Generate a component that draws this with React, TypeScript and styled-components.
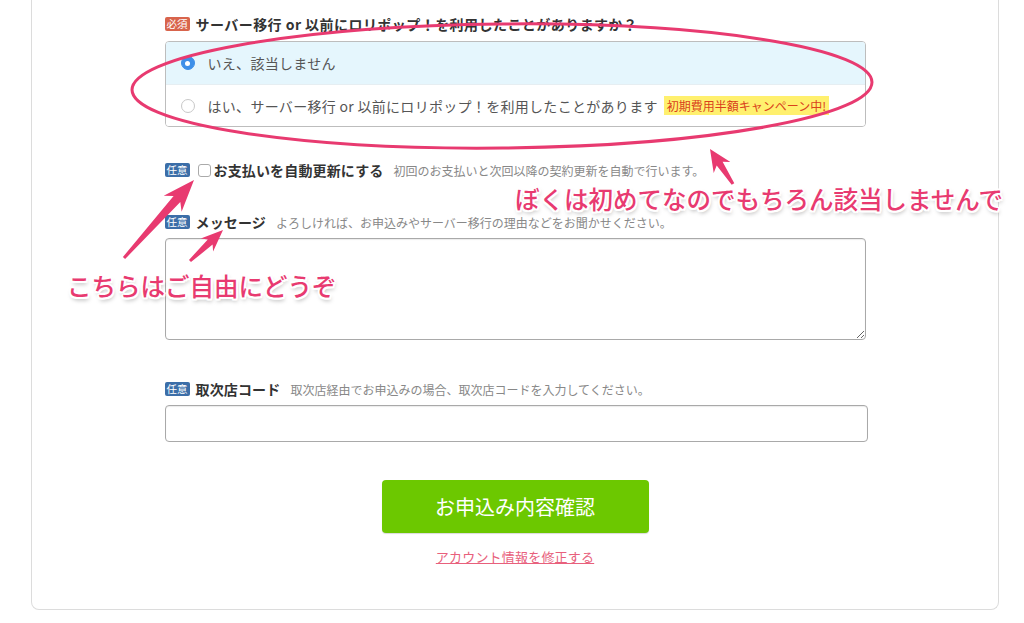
import React from "react";
import styled, { createGlobalStyle } from "styled-components";

const Global = createGlobalStyle`
  html, body { margin: 0; padding: 0; background: #fff; }
  body { font-family: "Noto Sans CJK JP", "Noto Sans", sans-serif; color: #333; }
  * { box-sizing: border-box; }
`;

const Root = styled.div`
  position: relative;
  width: 1024px;
  height: 623px;
  overflow: hidden;
`;

const Card = styled.div`
  margin-left: 31px;
  width: 968px;
  border: 1px solid #dcdcdc;
  border-top: none;
  border-radius: 0 0 8px 8px;
  padding: 14px 0 42px;
  background: #fff;
`;

const Form = styled.div`
  width: 701px;
  margin: 0 auto;
  display: flex;
  flex-direction: column;
`;

const LabelRow = styled.div<{ $mt?: number }>`
  display: flex;
  align-items: center;
  height: 20px;
  margin-top: ${(p) => p.$mt ?? 0}px;
  white-space: nowrap;
`;

const Badge = styled.span<{ $kind: "req" | "opt" }>`
  display: inline-flex;
  align-items: center;
  justify-content: center;
  height: 14px;
  padding: 0 2px;
  margin-right: 6px;
  font-size: 10.5px;
  line-height: 1;
  color: #fff;
  border-radius: 2px;
  background: ${(p) => (p.$kind === "req" ? "#d8644c" : "#3c6ea8")};
`;

const LabelText = styled.span<{ $ls?: number }>`
  font-size: 14px;
  font-weight: 700;
  letter-spacing: ${(p) => p.$ls ?? 0.15}px;
  color: #333;
`;

const Hint = styled.span`
  margin-left: 10px;
  font-size: 12px;
  color: #888;
`;

const RadioBox = styled.div`
  margin-top: 7px;
  border: 1px solid #bdbdbd;
  border-radius: 4px;
  overflow: hidden;
`;

const RadioRow = styled.label<{ $active?: boolean }>`
  display: flex;
  align-items: center;
  height: 42px;
  padding-left: 15px;
  background: ${(p) => (p.$active ? "#e5f6fd" : "#fff")};
  & + & { border-top: 1px solid #e6eef2; height: 42px; }
  font-size: 14px;
  letter-spacing: 0.3px;
  color: #555;
`;

const RadioDot = styled.span<{ $on?: boolean }>`
  position: relative;
  width: 14px;
  height: 14px;
  border-radius: 50%;
  margin-right: 13px;
  background: ${(p) => (p.$on ? "#3d8fe8" : "#fff")};
  border: 1px solid ${(p) => (p.$on ? "#3d8fe8" : "#c8c8c8")};
  &::after {
    content: "";
    display: ${(p) => (p.$on ? "block" : "none")};
    position: absolute;
    left: 50%;
    top: 50%;
    width: 5px;
    height: 5px;
    margin: -2.5px 0 0 -2.5px;
    border-radius: 50%;
    background: #fff;
  }
`;

const Campaign = styled.span`
  margin-left: 6px;
  padding: 1px 3px;
  font-size: 12px;
  letter-spacing: 0;
  color: #d9411c;
  background: #fff06e;
`;

const CheckBox = styled.span`
  width: 13px;
  height: 13px;
  margin: 0 3px 0 2px;
  border: 1px solid #aaa;
  border-radius: 3px;
  background: #fff;
`;

const TextArea = styled.textarea`
  margin-top: 6px;
  width: 701px;
  height: 102px;
  border: 1px solid #a9a9a9;
  border-radius: 4px;
  box-shadow: inset 0 1px 1px rgba(0, 0, 0, 0.08);
  font-family: inherit;
`;

const Input = styled.input`
  margin-top: 6px;
  width: 703px;
  height: 37px;
  border: 1px solid #a9a9a9;
  border-radius: 4px;
  box-shadow: inset 0 1px 1px rgba(0, 0, 0, 0.08);
`;

const Submit = styled.button`
  align-self: center;
  margin-top: 38px;
  width: 267px;
  height: 53px;
  border: none;
  border-radius: 4px;
  background: #6cc800;
  color: #fff;
  font-family: inherit;
  font-size: 20px;
  box-shadow: 0 1px 1px rgba(0, 0, 0, 0.15);
`;

const EditLink = styled.a`
  align-self: center;
  margin-top: 14px;
  height: 20px;
  line-height: 20px;
  font-size: 13px;
  letter-spacing: 0.2px;
  color: #e8607c;
  text-decoration: underline;
`;

const Overlay = styled.div`
  position: absolute;
  inset: 0;
  pointer-events: none;
`;

const Note = styled.div<{ $x: number; $y: number }>`
  position: absolute;
  left: ${(p) => p.$x}px;
  top: ${(p) => p.$y}px;
  font-size: 24.5px;
  line-height: 30px;
  font-weight: 500;
  white-space: nowrap;
  color: #e83a70;
  text-shadow: 2px 0 #fff, -2px 0 #fff, 0 2px #fff, 0 -2px #fff,
    1.5px 1.5px #fff, -1.5px 1.5px #fff, 1.5px -1.5px #fff, -1.5px -1.5px #fff,
    1px 3px 4px rgba(0, 0, 0, 0.35);
`;

const PINK = "#e83a70";

function arrow(tx: number, ty: number, px: number, py: number, headLen: number, headW: number, tailW: number, neckW: number) {
  const dx = px - tx;
  const dy = py - ty;
  const L = Math.hypot(dx, dy);
  const ux = dx / L;
  const uy = dy / L;
  const nx = -uy;
  const ny = ux;
  const bx = px - ux * headLen;
  const by = py - uy * headLen;
  const nbx = px - ux * headLen * 0.8;
  const nby = py - uy * headLen * 0.8;
  const pts = [
    [tx + (nx * tailW) / 2, ty + (ny * tailW) / 2],
    [nbx + (nx * neckW) / 2, nby + (ny * neckW) / 2],
    [bx + (nx * headW) / 2, by + (ny * headW) / 2],
    [px, py],
    [bx - (nx * headW) / 2, by - (ny * headW) / 2],
    [nbx - (nx * neckW) / 2, nby - (ny * neckW) / 2],
    [tx - (nx * tailW) / 2, ty - (ny * tailW) / 2],
  ];
  return pts.map((p) => p.map((v) => v.toFixed(1)).join(",")).join(" ");
}

export default function App() {
  return (
    <Root>
      <Global />
      <Card>
        <Form>
          <LabelRow>
            <Badge $kind="req">必須</Badge>
            <LabelText $ls={0.45}>サーバー移行 or 以前にロリポップ！を利用したことがありますか？</LabelText>
          </LabelRow>
          <RadioBox>
            <RadioRow $active>
              <RadioDot $on />
              いえ、該当しません
            </RadioRow>
            <RadioRow>
              <RadioDot />
              はい、サーバー移行 or 以前にロリポップ！を利用したことがあります
              <Campaign>初期費用半額キャンペーン中!</Campaign>
            </RadioRow>
          </RadioBox>

          <LabelRow $mt={33}>
            <Badge $kind="opt">任意</Badge>
            <CheckBox />
            <LabelText>お支払いを自動更新にする</LabelText>
            <Hint>初回のお支払いと次回以降の契約更新を自動で行います。</Hint>
          </LabelRow>

          <LabelRow $mt={32}>
            <Badge $kind="opt">任意</Badge>
            <LabelText>メッセージ</LabelText>
            <Hint>よろしければ、お申込みやサーバー移行の理由などをお聞かせください。</Hint>
          </LabelRow>
          <TextArea />

          <LabelRow $mt={39}>
            <Badge $kind="opt">任意</Badge>
            <LabelText>取次店コード</LabelText>
            <Hint>取次店経由でお申込みの場合、取次店コードを入力してください。</Hint>
          </LabelRow>
          <Input />

          <Submit>お申込み内容確認</Submit>
          <EditLink>アカウント情報を修正する</EditLink>
        </Form>
      </Card>

      <Overlay>
        <svg width="1024" height="623" viewBox="0 0 1024 623">
          <ellipse cx="502" cy="86" rx="370" ry="62" fill="none" stroke={PINK} strokeWidth="3" transform="rotate(-0.6 502 86)" />
          <polygon points={arrow(733, 184, 710, 149, 22, 20, 3, 7)} fill={PINK} />
          <polygon points={arrow(124, 258, 194, 180, 32, 24, 3, 9)} fill={PINK} />
          <polygon points={arrow(190, 261, 223, 230, 22, 18, 3, 7)} fill={PINK} />
        </svg>
        <Note $x={515} $y={184}>ぼくは初めてなのでもちろん該当しませんで</Note>
        <Note $x={67} $y={271}>こちらはご自由にどうぞ</Note>
      </Overlay>
    </Root>
  );
}
